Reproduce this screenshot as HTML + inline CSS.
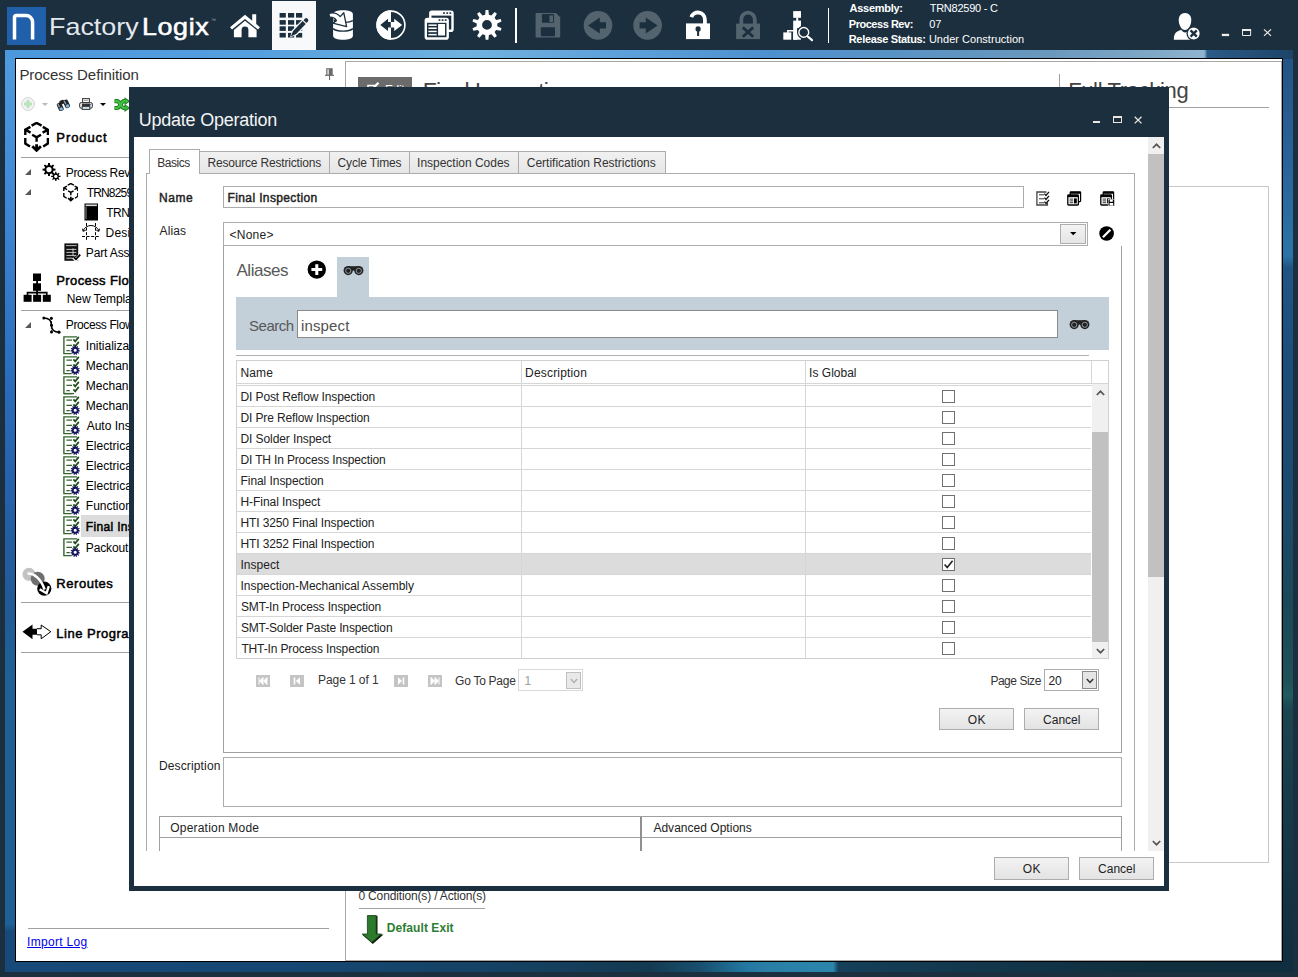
<!DOCTYPE html>
<html><head><meta charset="utf-8"><title>FactoryLogix - Update Operation</title>
<style>
html,body{margin:0;padding:0;}
body{width:1298px;height:977px;position:relative;overflow:hidden;background:#1b2f3e;font-family:"Liberation Sans",sans-serif;font-size:12px;}
.t{position:absolute;white-space:pre;line-height:1;}
div,svg,span{box-sizing:border-box;}

.ln{position:absolute;background:#a0a0a0;}
.btn{position:absolute;border:1px solid #adadad;background:linear-gradient(#f2f2f2,#e4e4e4);}

</style></head><body>
<div style="position:absolute;left:5px;top:50px;width:1288px;height:922px;background:#1d4f7e;"></div>
<div style="position:absolute;left:5px;top:50px;width:11px;height:922px;background:linear-gradient(180deg,#4f9ddd 0%,#4088d6 16%,#2a6dbc 35%,#2560a8 49%,#215a96 60%,#1f6096 68%,#1e6096 94.8%,#174a7a 95.6%,#174a7a 100%);"></div>
<div style="position:absolute;left:1282px;top:50px;width:11px;height:922px;background:linear-gradient(180deg,#245283 0%,#28639a 12%,#2b74a8 22.3%,#1f5585 23.6%,#1b4d7a 35%,#1b4a6e 49%,#1b4858 60%,#1e5058 68%,#205a60 70%,#1b4550 71.5%,#173a48 82%,#133344 92%,#0f2e40 100%);"></div>
<div style="position:absolute;left:5px;top:961px;width:1288px;height:11px;background:linear-gradient(90deg,#174a7a 0%,#164772 23%,#154264 38%,#143a52 50%,#18506f 54%,#2377a0 57.5%,#2a7ea6 59%,#2b86ac 64.3%,#15405a 64.7%,#12364a 77%,#0f2f3e 89%,#0f2e40 100%);"></div>
<div style="position:absolute;left:5px;top:50px;width:1288px;height:9px;background:linear-gradient(90deg,#4b97dc 0%,#55a0de 20%,#70b2df 36%,#5a9dd8 50%,#4e90cf 59.5%,#5a93c4 70%,#6a98bd 81%,#7ea8c6 89%,#90b4d0 93.1%,#2b5b88 93.35%,#1d4468 100%);"></div>
<div style="position:absolute;left:15px;top:58px;width:1268px;height:904px;background:#fff;border:1px solid #000;"></div>
<div style="position:absolute;left:0px;top:0px;width:1298px;height:50px;background:#1b2f3e;"></div>
<div style="position:absolute;left:7px;top:7px;width:39px;height:38px;background:#2060ab;"></div>
<svg style="position:absolute;left:7px;top:7px;" width="39" height="38" viewBox="0 0 39 38"><path d="M7.5 32.6 V10.6 a2 2 0 0 1 2 -2 H19 a6.6 6.6 0 0 1 6.6 6.6 V32.6" fill="none" stroke="#fff" stroke-width="3.5"/></svg>
<span class="t" style="left:49.0px;top:15px;font-size:24px;font-weight:400;color:#e3e8ec;letter-spacing:0.014px;transform:scaleX(1.12);transform-origin:0 0;">Factory</span>
<span class="t" style="left:142.0px;top:15px;font-size:24px;font-weight:400;color:#fff;letter-spacing:0.530px;transform:scaleX(1.12);transform-origin:0 0;-webkit-text-stroke:0.55px #fff;">Logix</span>
<span class="t" style="left:211px;top:18px;font-size:5px;font-weight:400;color:#9ab;letter-spacing:0.000px;">™</span>
<div style="position:absolute;left:272px;top:1px;width:44px;height:49px;background:#f8f9fb;"></div>
<div style="position:absolute;left:515px;top:8px;width:2px;height:35px;background:#fff;"></div>
<div style="position:absolute;left:828px;top:8px;width:1px;height:35px;background:#fff;"></div>
<span class="t" style="left:849.6px;top:3px;font-size:11px;font-weight:700;color:#fff;letter-spacing:-0.291px;">Assembly:</span>
<span class="t" style="left:929.7px;top:3px;font-size:11px;font-weight:400;color:#fff;letter-spacing:-0.242px;">TRN82590 - C</span>
<span class="t" style="left:848.77px;top:19px;font-size:11px;font-weight:700;color:#fff;letter-spacing:-0.467px;">Process Rev:</span>
<span class="t" style="left:929.26px;top:19px;font-size:11px;font-weight:400;color:#fff;letter-spacing:-0.215px;">07</span>
<span class="t" style="left:848.77px;top:34px;font-size:11px;font-weight:700;color:#fff;letter-spacing:-0.335px;">Release Status:</span>
<span class="t" style="left:928.88px;top:34px;font-size:11px;font-weight:400;color:#fff;letter-spacing:0.030px;">Under Construction</span>
<span class="t" style="left:19.38px;top:67px;font-size:15px;font-weight:400;color:#333;letter-spacing:-0.077px;">Process Definition</span>
<div class="ln" style="position:absolute;left:21px;top:157px;width:308px;height:1px;"></div>
<svg style="position:absolute;left:0;top:0" width="1298" height="50" viewBox="0 0 1298 50"><path d="M245 14.8 L230 27.2 L232 29.6 L245 18.9 L258 29.6 L260 27.2 L256.2 24 V14.2 H252.2 V20.7 Z" fill="#fff"/><path d="M245 20.8 L233.9 30 V37.2 H241.6 V29.8 a3.4 3.4 0 0 1 6.8 0 V37.2 H256.6 V30 Z" fill="#fff"/><rect x="279.6" y="13" width="6.2" height="4.6" fill="#1b2f3e"/><rect x="279.6" y="20.1" width="6.2" height="4.6" fill="#1b2f3e"/><rect x="279.6" y="26.3" width="6.2" height="4.6" fill="#1b2f3e"/><rect x="279.6" y="32.9" width="6.2" height="4.6" fill="#1b2f3e"/><rect x="288" y="13" width="6.2" height="4.6" fill="#1b2f3e"/><rect x="288" y="20.1" width="6.2" height="4.6" fill="#1b2f3e"/><rect x="288" y="26.3" width="6.2" height="4.6" fill="#1b2f3e"/><rect x="288" y="32.9" width="6.2" height="4.6" fill="#1b2f3e"/><rect x="296" y="13" width="6.2" height="4.6" fill="#1b2f3e"/><rect x="296" y="20.1" width="6.2" height="4.6" fill="#1b2f3e"/><rect x="296" y="26.3" width="6.2" height="4.6" fill="#1b2f3e"/><rect x="296" y="32.9" width="6.2" height="4.6" fill="#1b2f3e"/><g transform="translate(290.8,36.6) rotate(-46.5)"><path d="M-1 0 L5.5 -3.4 H24.5 a3 3 0 0 1 0 6.8 H5.5 Z" fill="#f8f9fb"/><path d="M0 0 L5.6 -2.1 H19.4 V2.1 H5.6 Z" fill="#1b2f3e"/><path d="M20.6 -2.1 H22.4 a2.1 2.1 0 0 1 0 4.2 H20.6 Z" fill="#1b2f3e"/></g><path d="M333.1 14 C333.1 11.6 337.6 10.2 343 10.2 S352.9 11.6 352.9 14 V36 C352.9 38.3 348.4 39.7 343 39.7 S333.1 38.3 333.1 36 Z" fill="#fff"/><path d="M333.1 28.6 C337 32 349 32 352.9 28.6" stroke="#1b2f3e" stroke-width="1.4" fill="none"/><path d="M345.5 22.3 C348.5 22.2 351 21.6 352.9 20.6" stroke="#1b2f3e" stroke-width="1.3" fill="none"/><path d="M329 13.4 C333 12.4 337.5 13.6 340.2 16.6 L343.8 12.8 L346.6 26.6 L332.8 23.2 L336.4 20.6 C335.2 18.4 332.6 17 329.4 17.2 Z" fill="#fff" stroke="#1b2f3e" stroke-width="1.3" stroke-linejoin="round"/><path d="M333.2 19.2 C334.6 19.4 335.8 20 336.6 20.8 L334 22.6 Z" fill="#1b2f3e"/><circle cx="391" cy="25" r="13.9" fill="none" stroke="#fff" stroke-width="1.6"/><path d="M391 10.3 A14.7 14.7 0 0 0 391 39.7 Z" fill="#fff"/><path d="M380.3 24.9 L388 18.8 V22 H391.2 V27.6 H388 V31 Z" fill="#1b2f3e"/><path d="M402.2 24.9 L394.2 18.8 V22 H390.8 V27.6 H394.2 V31 Z" fill="#fff"/><rect x="430.3" y="11.6" width="22.2" height="19.2" rx="1.6" fill="#1b2f3e" stroke="#fff" stroke-width="2.4"/><rect x="430.3" y="11.6" width="22.2" height="4" fill="#fff"/><rect x="443.1" y="12.3" width="1.8" height="1.6" fill="#1b2f3e"/><rect x="446.3" y="12.3" width="1.8" height="1.6" fill="#1b2f3e"/><rect x="449.40000000000003" y="12.3" width="1.8" height="1.6" fill="#1b2f3e"/><rect x="425.8" y="19" width="21.9" height="19.5" rx="1.6" fill="#1b2f3e" stroke="#fff" stroke-width="2.4"/><rect x="425.8" y="19" width="21.9" height="3.8" fill="#fff"/><rect x="438.6" y="19.3" width="1.8" height="1.6" fill="#1b2f3e"/><rect x="441.70000000000005" y="19.3" width="1.8" height="1.6" fill="#1b2f3e"/><rect x="444.8" y="19.3" width="1.8" height="1.6" fill="#1b2f3e"/><rect x="428.4" y="24.4" width="8.3" height="1.5" fill="#fff"/><rect x="428.4" y="27.5" width="8.3" height="1.5" fill="#fff"/><rect x="428.4" y="30.7" width="8.3" height="1.5" fill="#fff"/><rect x="428.4" y="33.9" width="8.3" height="1.5" fill="#fff"/><rect x="438.1" y="24" width="6.9" height="11.5" fill="#fff"/><path d="M485.6 10.1 L488.4 10.1 L488.9 14.7 L491.4 15.5 L494.6 12.1 L496.9 13.7 L494.6 17.8 L496.1 19.9 L500.7 19.0 L501.5 21.6 L497.3 23.6 L497.3 26.2 L501.5 28.2 L500.7 30.8 L496.1 29.9 L494.6 32.0 L496.9 36.1 L494.6 37.7 L491.4 34.3 L488.9 35.1 L488.4 39.7 L485.6 39.7 L485.1 35.1 L482.6 34.3 L479.4 37.7 L477.1 36.1 L479.4 32.0 L477.9 29.9 L473.3 30.8 L472.5 28.2 L476.7 26.2 L476.7 23.6 L472.5 21.6 L473.3 19.0 L477.9 19.9 L479.4 17.8 L477.1 13.7 L479.4 12.1 L482.6 15.5 L485.1 14.7 Z M482.10 24.90 a4.9 4.9 0 1 0 9.8 0 a4.9 4.9 0 1 0 -9.8 0 Z" fill="#fff" fill-rule="evenodd"/><path d="M536.8 13 H556 L560.2 17.3 V36.4 a1.2 1.2 0 0 1 -1.2 1.2 H536.8 a1.2 1.2 0 0 1 -1.2 -1.2 V14.2 a1.2 1.2 0 0 1 1.2 -1.2 Z" fill="#54646f"/><rect x="541.9" y="14" width="12.1" height="8.7" rx=".8" fill="#1b2f3e"/><rect x="549.5" y="15.4" width="3.5" height="6.6" fill="#54646f"/><rect x="540.8" y="27.2" width="14.2" height="9" rx=".8" fill="#1b2f3e"/><circle cx="598" cy="25.4" r="14.3" fill="#54646f"/><path d="M588 25.4 L599.8 17.4 V22.3 H606 V28.4 H599.8 V33.4 Z" fill="#1b2f3e"/><circle cx="647.6" cy="25.4" r="14.3" fill="#54646f"/><path d="M657.6 25.4 L645.8 17.4 V22.3 H639.6 V28.4 H645.8 V33.4 Z" fill="#1b2f3e"/><path d="M691.3 17.2 A7 7 0 0 1 704.9 19.6 V24" fill="none" stroke="#fff" stroke-width="3.8"/><rect x="686" y="23.4" width="24" height="15.7" fill="#fff"/><circle cx="698.1" cy="28.9" r="2.6" fill="#1b2f3e"/><rect x="697.1" y="29" width="2" height="7" fill="#1b2f3e"/><path d="M741.3 24 V19.4 a6.75 6.75 0 0 1 13.5 0 V24" fill="none" stroke="#54646f" stroke-width="3.8"/><rect x="736.1" y="23.6" width="23.9" height="15.5" fill="#54646f"/><path d="M742.8 27.4 L753.2 36.8 M753.2 27.4 L742.8 36.8" stroke="#1b2f3e" stroke-width="2.8"/><rect x="793.2" y="11.1" width="7.8" height="6.7" fill="#fff"/><rect x="796.2" y="17.5" width="2" height="3.5" fill="#fff"/><rect x="793.2" y="20.6" width="7.8" height="7.4" fill="#fff"/><rect x="793.2" y="27.5" width="4" height="12.2" fill="#fff"/><rect x="787.2" y="30" width="7" height="1.5" fill="#fff"/><rect x="787.2" y="30" width="1.5" height="3" fill="#fff"/><rect x="783.3" y="32.4" width="8" height="7.3" fill="#fff"/><rect x="793.2" y="32.4" width="7.8" height="7.3" fill="#fff"/><circle cx="803.8" cy="32.4" r="5.6" fill="#1b2f3e" stroke="#1b2f3e" stroke-width="2.4"/><circle cx="803.8" cy="32.4" r="4.9" fill="none" stroke="#fff" stroke-width="1.4"/><path d="M807.4 36.2 L812 40.2" stroke="#1b2f3e" stroke-width="4.2"/><path d="M807.6 36.4 L812 40.2" stroke="#fff" stroke-width="2.2" stroke-linecap="round"/><path d="M1185 12.9 C1189 12.9 1191.3 16 1191.3 20 C1191.3 25 1188.5 30 1185 30 C1181.5 30 1178.7 25 1178.7 20 C1178.7 16 1181 12.9 1185 12.9 Z" fill="#fff"/><path d="M1173.8 39.7 C1173.8 33.5 1176 31.6 1181.2 29.8 C1182.5 31.6 1183.6 32.4 1185 32.4 C1186.4 32.4 1187.6 31.6 1188.8 29.8 L1192 31 V39.7 Z" fill="#fff"/><circle cx="1193.7" cy="33.5" r="6.6" fill="#fff" stroke="#1b2f3e" stroke-width="1.3"/><path d="M1190.6 30.4 L1196.8 36.6 M1196.8 30.4 L1190.6 36.6" stroke="#1b2f3e" stroke-width="2.4"/><rect x="1221.8" y="33.8" width="7.3" height="2.3" fill="#f0ede8"/><path d="M1242.5 30 H1250.6 V35.5 H1242.5 Z" fill="none" stroke="#f0ede8" stroke-width="1"/><rect x="1242" y="29" width="9.1" height="2" fill="#f0ede8"/><path d="M1264 29.4 L1271 35.9 M1271 29.4 L1264 35.9" stroke="#f0ede8" stroke-width="1.2"/></svg>
<svg style="position:absolute;left:325px;top:68px;" width="9" height="12" viewBox="0 0 9 12"><rect x="1.2" y="0.2" width="6.5" height="7" fill="#6b6b6b"/><rect x="2.4" y="1.2" width="1.4" height="5.6" fill="#fff" opacity=".85"/><rect x="0" y="6.8" width="9" height="1.1" fill="#6b6b6b"/><rect x="4" y="7.8" width="1.1" height="4.2" fill="#6b6b6b"/></svg>
<svg style="position:absolute;left:21px;top:97px;" width="14" height="14" viewBox="0 0 14 14"><circle cx="7" cy="7" r="6.4" fill="#f3f3f3" stroke="#d2d2d2" stroke-width="1"/><path d="M7 3 V11 M3 7 H11" stroke="#b9e3b9" stroke-width="3"/></svg>
<svg style="position:absolute;left:42px;top:103px;" width="6" height="3" viewBox="0 0 6 3"><path d="M0 0 H6 L3 3 Z" fill="#b9b9b9"/></svg>
<svg style="position:absolute;left:56px;top:97.5px;" width="14" height="13" viewBox="0 0 14 13"><g transform="rotate(-25 7 6.5)"><rect x="1" y="3.2" width="5" height="8.5" rx="2" fill="#222"/><rect x="8" y="3.2" width="5" height="8.5" rx="2" fill="#222"/><rect x="4.5" y="2" width="5" height="4" rx="1.5" fill="#222"/>
<rect x="1.8" y="8.2" width="3.4" height="3" rx="1.2" fill="#7db7e6"/><rect x="8.8" y="8.2" width="3.4" height="3" rx="1.2" fill="#7db7e6"/><rect x="2" y="4" width="1.3" height="3.5" fill="#8fa9c4"/><rect x="9" y="4" width="1.3" height="3.5" fill="#8fa9c4"/></g></svg>
<svg style="position:absolute;left:79px;top:98px;" width="14" height="12" viewBox="0 0 14 12"><rect x="3.6" y="0.6" width="6.8" height="4.4" fill="#fff" stroke="#333" stroke-width="1"/><rect x="4.6" y="1.8" width="4.8" height="1" fill="#999"/>
<rect x="0.6" y="4.6" width="12.8" height="5.6" rx="1.6" fill="#e6e6e6" stroke="#333" stroke-width="1"/><rect x="3" y="5.6" width="8" height="2.4" fill="#333"/>
<rect x="3.2" y="8.6" width="7.6" height="2.8" fill="#fff" stroke="#333" stroke-width="1"/><rect x="4.4" y="9.6" width="5" height="1" fill="#9fd0e8"/><rect x="11" y="6" width="1.2" height="1.2" fill="#4a7fd0"/></svg>
<svg style="position:absolute;left:100px;top:103px;" width="6" height="3" viewBox="0 0 6 3"><path d="M0 0 H6 L3 3 Z" fill="#000"/></svg>
<svg style="position:absolute;left:113px;top:96.5px;" width="18" height="15" viewBox="0 0 18 15"><g fill="none" stroke="#1d7d1d" stroke-width="4.2"><path d="M1.5 4.2 H4 C7.5 4.2 7.5 11 11 11 H12"/><path d="M1.5 11 H4 C7.5 11 7.5 4.2 11 4.2 H12"/></g>
<path d="M11.5 0.2 L17.3 4.2 L11.5 8.2 Z M11.5 7 L17.3 11 L11.5 15 Z" fill="#1d7d1d"/>
<g fill="none" stroke="#43c043" stroke-width="2.2"><path d="M1.8 4.2 H4 C7.5 4.2 7.5 11 11 11 H12.5"/><path d="M1.8 11 H4 C7.5 11 7.5 4.2 11 4.2 H12.5"/></g>
<path d="M12.4 2 L15.6 4.2 L12.4 6.4 Z M12.4 8.8 L15.6 11 L12.4 13.2 Z" fill="#43c043"/></svg>
<svg style="position:absolute;left:24px;top:121.8px;" width="25.3" height="30" viewBox="0 0 25.3 30"><g fill="none" stroke="#000" stroke-width="2.4">
<path d="M7.6 3.6 L12.6 0.9 L17.6 3.6"/>
<path d="M6.4 4.9 L1.4 7.7 L6.6 10.6 M1.3 7.2 V13"/>
<path d="M18.8 4.9 L23.8 7.7 L18.6 10.6 M23.9 7.2 V13"/>
<path d="M8.2 12.7 L12.6 15.3 L17 12.7 M12.6 15.3 V19.8"/>
<path d="M1.3 16 V21.6 L6 24.6"/><path d="M23.9 16 V21.6 L19.2 24.6"/>
<path d="M12.6 22.2 V28 M8.3 24.3 L12.6 28.4 L16.9 24.3" stroke-width="2.8"/></g></svg>
<span class="t" style="left:56.32px;top:131px;font-size:13px;font-weight:400;color:#000;letter-spacing:0.921px;-webkit-text-stroke:0.5px #000;">Product</span>
<div style="position:absolute;left:21px;top:157px;width:308px;height:1px;background:#a0a0a0;"></div>
<svg style="position:absolute;left:25px;top:169px;" width="6" height="6" viewBox="0 0 6 6"><path d="M6 0 V6 H0 Z" fill="#595959"/></svg>
<svg style="position:absolute;left:25px;top:189px;" width="6" height="6" viewBox="0 0 6 6"><path d="M6 0 V6 H0 Z" fill="#595959"/></svg>
<svg style="position:absolute;left:41.5px;top:162.5px;" width="19" height="18.5" viewBox="0 0 19 18.5"><path d="M6.1 0.1 L7.9 0.1 L8.1 2.1 L9.4 2.7 L11.0 1.4 L12.2 2.6 L10.9 4.2 L11.5 5.5 L13.5 5.7 L13.5 7.5 L11.5 7.7 L10.9 9.0 L12.2 10.6 L11.0 11.8 L9.4 10.5 L8.1 11.1 L7.9 13.1 L6.1 13.1 L5.9 11.1 L4.6 10.5 L3.0 11.8 L1.8 10.6 L3.1 9.0 L2.5 7.7 L0.5 7.5 L0.5 5.7 L2.5 5.5 L3.1 4.2 L1.8 2.6 L3.0 1.4 L4.6 2.7 L5.9 2.1 Z M4.40 6.60 a2.6 2.6 0 1 0 5.2 0 a2.6 2.6 0 1 0 -5.2 0 Z" fill="#000" fill-rule="evenodd"/><path d="M13.2 8.7 L14.4 8.7 L14.5 10.3 L15.5 10.7 L16.7 9.7 L17.5 10.5 L16.5 11.7 L16.9 12.7 L18.5 12.8 L18.5 14.0 L16.9 14.1 L16.5 15.1 L17.5 16.3 L16.7 17.1 L15.5 16.1 L14.5 16.5 L14.4 18.1 L13.2 18.1 L13.1 16.5 L12.1 16.1 L10.9 17.1 L10.1 16.3 L11.1 15.1 L10.7 14.1 L9.1 14.0 L9.1 12.8 L10.7 12.7 L11.1 11.7 L10.1 10.5 L10.9 9.7 L12.1 10.7 L13.1 10.3 Z M12.10 13.40 a1.7 1.7 0 1 0 3.4 0 a1.7 1.7 0 1 0 -3.4 0 Z" fill="#000" fill-rule="evenodd"/></svg>
<span class="t" style="left:65.8px;top:167px;font-size:12px;font-weight:400;color:#000;letter-spacing:-0.360px;">Process Revision</span>
<svg style="position:absolute;left:62.8px;top:183px;" width="15.69" height="18.6" viewBox="0 0 25.3 30"><g fill="none" stroke="#000" stroke-width="2.3">
<path d="M7.6 3.6 L12.6 0.9 L17.6 3.6"/>
<path d="M6.4 4.9 L1.4 7.7 L6.6 10.6 M1.3 7.2 V13"/>
<path d="M18.8 4.9 L23.8 7.7 L18.6 10.6 M23.9 7.2 V13"/>
<path d="M8.2 12.7 L12.6 15.3 L17 12.7 M12.6 15.3 V19.8"/>
<path d="M1.3 16 V21.6 L6 24.6"/><path d="M23.9 16 V21.6 L19.2 24.6"/>
<path d="M12.6 22.2 V28 M8.3 24.3 L12.6 28.4 L16.9 24.3" stroke-width="2.6999999999999997"/></g></svg>
<span class="t" style="left:86.7px;top:187px;font-size:12px;font-weight:400;color:#000;letter-spacing:-0.828px;">TRN82590 - C</span>
<svg style="position:absolute;left:84px;top:203px;" width="15" height="18" viewBox="0 0 15 18"><rect x="0.5" y="0.5" width="13.5" height="17" fill="#000"/><rect x="1.6" y="1.5" width="11.3" height="1.6" fill="#ddd"/><rect x="1.6" y="3.6" width="0.8" height="12.5" fill="#bbb"/></svg>
<span class="t" style="left:106.3px;top:207px;font-size:12px;font-weight:400;color:#000;letter-spacing:-0.574px;">TRN82590</span>
<svg style="position:absolute;left:82px;top:223px;" width="18" height="18" viewBox="0 0 18 18"><g stroke="#000" stroke-width="1" fill="none"><path d="M4.5 0 V18 M13.5 0 V18 M0 13.5 H18" stroke-dasharray="3 1.6"/><path d="M0.8 8.2 C4 0.6 14 0.6 17.2 8.2" /><path d="M0.4 5.6 L1.4 8.4 L3.8 7 M17.6 5.6 L16.6 8.4 L14.2 7"/></g></svg>
<span class="t" style="left:105.6px;top:227px;font-size:12px;font-weight:400;color:#000;letter-spacing:0.180px;">Design</span>
<svg style="position:absolute;left:63.5px;top:243px;" width="17" height="18.5" viewBox="0 0 17 18.5"><rect x="0.4" y="0.4" width="13.8" height="17.4" fill="#111"/>
<path d="M2 2.6 H12.6" stroke="#bbb" stroke-width="1"/>
<path d="M2.4 6.4 H12.4 M2.4 9.4 H12.4 M2.4 12.4 H12.4 M2.4 15.2 H8.4" stroke="#d8d8d8" stroke-width=".9"/><path d="M9 5.4 V12.6" stroke="#d8d8d8" stroke-width=".9"/>
<path d="M9.3 14.2 L12 16.9 L16.5 11.8" stroke="#fff" stroke-width="3.4" fill="none"/><path d="M9.7 14 L12 16.3 L16.2 11.6" stroke="#000" stroke-width="1.8" fill="none"/></svg>
<span class="t" style="left:85.8px;top:247px;font-size:12px;font-weight:400;color:#000;letter-spacing:-0.129px;">Part Assignment</span>
<svg style="position:absolute;left:22.5px;top:272.6px;" width="29" height="29" viewBox="0 0 29 29"><rect x="10" y="0.5" width="8" height="7.5" fill="#000"/><rect x="10" y="10.3" width="8" height="7.5" fill="#000"/><rect x="13.2" y="7.5" width="1.8" height="13.5" fill="#000"/>
<path d="M4.5 24 V19.6 H23.8 V24 M14.1 19 V24" stroke="#000" stroke-width="1.6" fill="none"/>
<rect x="0.6" y="21.8" width="8" height="7" fill="#000"/><rect x="10.1" y="21.8" width="8" height="7" fill="#000"/><rect x="19.8" y="21.8" width="8" height="7" fill="#000"/></svg>
<span class="t" style="left:56.32px;top:274px;font-size:13px;font-weight:400;color:#000;letter-spacing:0.377px;-webkit-text-stroke:0.5px #000;">Process Flow</span>
<span class="t" style="left:66.8px;top:293px;font-size:12px;font-weight:400;color:#000;letter-spacing:-0.099px;">New Template</span>
<div style="position:absolute;left:21px;top:310px;width:308px;height:1px;background:#a0a0a0;"></div>
<svg style="position:absolute;left:25px;top:322px;" width="6" height="6" viewBox="0 0 6 6"><path d="M6 0 V6 H0 Z" fill="#595959"/></svg>
<svg style="position:absolute;left:41.5px;top:315.5px;" width="19" height="18.5" viewBox="0 0 19 18.5"><path d="M1.5 2 C8 2 9.5 5 9.5 9.2 S11 16.2 17.2 16.2" fill="none" stroke="#000" stroke-width="1.5"/>
<circle cx="1.8" cy="2" r="1.5"/><circle cx="9.4" cy="2.2" r="1.5"/><circle cx="9.5" cy="9.2" r="1.5"/><circle cx="9.5" cy="16" r="1.5"/><circle cx="17" cy="16.2" r="1.6"/>
<path d="M9.4 2.2 V16" stroke="#000" stroke-width=".9" stroke-dasharray="1.5 1.5"/></svg>
<span class="t" style="left:65.8px;top:319px;font-size:12px;font-weight:400;color:#000;letter-spacing:-0.383px;">Process Flow</span>
<svg style="position:absolute;left:63.3px;top:335.6px;" width="17" height="19.5" viewBox="0 0 17 19.5"><path d="M14 0.9 H0.9 V17.6 H8.6" fill="none" stroke="#35642f" stroke-width="1.4"/>
<path d="M3.4 4.1 H9 M3.4 9.3 H9 M3.4 14.6 H6.8" stroke="#35642f" stroke-width="1.2"/>
<path d="M10.4 3.4 L12.2 5.4 L15.8 0.9" fill="none" stroke="#1f4d1c" stroke-width="1.7"/>
<path d="M10.4 8.4 L12.2 10.4 L15.8 5.9" fill="none" stroke="#1f4d1c" stroke-width="1.7"/><circle cx="12.2" cy="14.3" r="3.3" fill="#fff"/><path d="M11.7 9.6 L12.7 9.6 L12.9 11.0 L13.4 11.1 L14.3 10.1 L15.2 10.7 L14.6 11.9 L14.9 12.3 L16.2 11.9 L16.7 12.8 L15.5 13.5 L15.6 14.1 L16.9 14.4 L16.7 15.5 L15.4 15.5 L15.2 16.0 L16.1 17.0 L15.4 17.8 L14.3 17.0 L13.8 17.3 L14.0 18.6 L13.0 18.9 L12.5 17.7 L11.9 17.7 L11.4 18.9 L10.4 18.6 L10.6 17.3 L10.1 17.0 L9.0 17.8 L8.3 17.0 L9.2 16.0 L9.0 15.5 L7.7 15.5 L7.5 14.4 L8.8 14.1 L8.9 13.5 L7.7 12.8 L8.2 11.9 L9.5 12.3 L9.8 11.9 L9.2 10.7 L10.1 10.1 L11.0 11.1 L11.5 11.0 Z M10.65 14.30 a1.55 1.55 0 1 0 3.1 0 a1.55 1.55 0 1 0 -3.1 0 Z" fill="#15155f" fill-rule="evenodd"/></svg>
<span class="t" style="left:85.8px;top:340px;font-size:12px;font-weight:400;color:#000;letter-spacing:0.000px;">Initialization</span>
<svg style="position:absolute;left:63.3px;top:355.6px;" width="17" height="19.5" viewBox="0 0 17 19.5"><path d="M14 0.9 H0.9 V17.6 H8.6" fill="none" stroke="#35642f" stroke-width="1.4"/>
<path d="M3.4 4.1 H9 M3.4 9.3 H9 M3.4 14.6 H6.8" stroke="#35642f" stroke-width="1.2"/>
<path d="M10.4 3.4 L12.2 5.4 L15.8 0.9" fill="none" stroke="#1f4d1c" stroke-width="1.7"/>
<path d="M10.4 8.4 L12.2 10.4 L15.8 5.9" fill="none" stroke="#1f4d1c" stroke-width="1.7"/><circle cx="12.2" cy="14.3" r="3.3" fill="#fff"/><path d="M11.7 9.6 L12.7 9.6 L12.9 11.0 L13.4 11.1 L14.3 10.1 L15.2 10.7 L14.6 11.9 L14.9 12.3 L16.2 11.9 L16.7 12.8 L15.5 13.5 L15.6 14.1 L16.9 14.4 L16.7 15.5 L15.4 15.5 L15.2 16.0 L16.1 17.0 L15.4 17.8 L14.3 17.0 L13.8 17.3 L14.0 18.6 L13.0 18.9 L12.5 17.7 L11.9 17.7 L11.4 18.9 L10.4 18.6 L10.6 17.3 L10.1 17.0 L9.0 17.8 L8.3 17.0 L9.2 16.0 L9.0 15.5 L7.7 15.5 L7.5 14.4 L8.8 14.1 L8.9 13.5 L7.7 12.8 L8.2 11.9 L9.5 12.3 L9.8 11.9 L9.2 10.7 L10.1 10.1 L11.0 11.1 L11.5 11.0 Z M10.65 14.30 a1.55 1.55 0 1 0 3.1 0 a1.55 1.55 0 1 0 -3.1 0 Z" fill="#15155f" fill-rule="evenodd"/></svg>
<span class="t" style="left:85.8px;top:360px;font-size:12px;font-weight:400;color:#000;letter-spacing:0.000px;">Mechanical Assembly</span>
<svg style="position:absolute;left:63.3px;top:375.6px;" width="17" height="19.5" viewBox="0 0 17 19.5"><path d="M14 0.9 H0.9 V17.6 H8.6" fill="none" stroke="#35642f" stroke-width="1.4"/>
<path d="M3.4 4.1 H9 M3.4 9.3 H9 M3.4 14.6 H6.8" stroke="#35642f" stroke-width="1.2"/>
<path d="M10.4 3.4 L12.2 5.4 L15.8 0.9" fill="none" stroke="#1f4d1c" stroke-width="1.7"/>
<path d="M10.4 8.4 L12.2 10.4 L15.8 5.9" fill="none" stroke="#1f4d1c" stroke-width="1.7"/><path d="M10.4 13.4 L12.2 15.4 L15.8 10.9" fill="none" stroke="#1f4d1c" stroke-width="1.7"/><path d="M11 17.6 H0.9" stroke="#35642f" stroke-width="1.4"/></svg>
<span class="t" style="left:85.8px;top:380px;font-size:12px;font-weight:400;color:#000;letter-spacing:0.000px;">Mechanical Assembly</span>
<svg style="position:absolute;left:63.3px;top:395.6px;" width="17" height="19.5" viewBox="0 0 17 19.5"><path d="M14 0.9 H0.9 V17.6 H8.6" fill="none" stroke="#35642f" stroke-width="1.4"/>
<path d="M3.4 4.1 H9 M3.4 9.3 H9 M3.4 14.6 H6.8" stroke="#35642f" stroke-width="1.2"/>
<path d="M10.4 3.4 L12.2 5.4 L15.8 0.9" fill="none" stroke="#1f4d1c" stroke-width="1.7"/>
<path d="M10.4 8.4 L12.2 10.4 L15.8 5.9" fill="none" stroke="#1f4d1c" stroke-width="1.7"/><circle cx="12.2" cy="14.3" r="3.3" fill="#fff"/><path d="M11.7 9.6 L12.7 9.6 L12.9 11.0 L13.4 11.1 L14.3 10.1 L15.2 10.7 L14.6 11.9 L14.9 12.3 L16.2 11.9 L16.7 12.8 L15.5 13.5 L15.6 14.1 L16.9 14.4 L16.7 15.5 L15.4 15.5 L15.2 16.0 L16.1 17.0 L15.4 17.8 L14.3 17.0 L13.8 17.3 L14.0 18.6 L13.0 18.9 L12.5 17.7 L11.9 17.7 L11.4 18.9 L10.4 18.6 L10.6 17.3 L10.1 17.0 L9.0 17.8 L8.3 17.0 L9.2 16.0 L9.0 15.5 L7.7 15.5 L7.5 14.4 L8.8 14.1 L8.9 13.5 L7.7 12.8 L8.2 11.9 L9.5 12.3 L9.8 11.9 L9.2 10.7 L10.1 10.1 L11.0 11.1 L11.5 11.0 Z M10.65 14.30 a1.55 1.55 0 1 0 3.1 0 a1.55 1.55 0 1 0 -3.1 0 Z" fill="#15155f" fill-rule="evenodd"/></svg>
<span class="t" style="left:85.8px;top:400px;font-size:12px;font-weight:400;color:#000;letter-spacing:0.000px;">Mechanical Assembly</span>
<svg style="position:absolute;left:63.3px;top:415.6px;" width="17" height="19.5" viewBox="0 0 17 19.5"><path d="M14 0.9 H0.9 V17.6 H8.6" fill="none" stroke="#35642f" stroke-width="1.4"/>
<path d="M3.4 4.1 H9 M3.4 9.3 H9 M3.4 14.6 H6.8" stroke="#35642f" stroke-width="1.2"/>
<path d="M10.4 3.4 L12.2 5.4 L15.8 0.9" fill="none" stroke="#1f4d1c" stroke-width="1.7"/>
<path d="M10.4 8.4 L12.2 10.4 L15.8 5.9" fill="none" stroke="#1f4d1c" stroke-width="1.7"/><circle cx="12.2" cy="14.3" r="3.3" fill="#fff"/><path d="M11.7 9.6 L12.7 9.6 L12.9 11.0 L13.4 11.1 L14.3 10.1 L15.2 10.7 L14.6 11.9 L14.9 12.3 L16.2 11.9 L16.7 12.8 L15.5 13.5 L15.6 14.1 L16.9 14.4 L16.7 15.5 L15.4 15.5 L15.2 16.0 L16.1 17.0 L15.4 17.8 L14.3 17.0 L13.8 17.3 L14.0 18.6 L13.0 18.9 L12.5 17.7 L11.9 17.7 L11.4 18.9 L10.4 18.6 L10.6 17.3 L10.1 17.0 L9.0 17.8 L8.3 17.0 L9.2 16.0 L9.0 15.5 L7.7 15.5 L7.5 14.4 L8.8 14.1 L8.9 13.5 L7.7 12.8 L8.2 11.9 L9.5 12.3 L9.8 11.9 L9.2 10.7 L10.1 10.1 L11.0 11.1 L11.5 11.0 Z M10.65 14.30 a1.55 1.55 0 1 0 3.1 0 a1.55 1.55 0 1 0 -3.1 0 Z" fill="#15155f" fill-rule="evenodd"/></svg>
<span class="t" style="left:86.7px;top:420px;font-size:12px;font-weight:400;color:#000;letter-spacing:0.000px;">Auto Inspection</span>
<svg style="position:absolute;left:63.3px;top:435.6px;" width="17" height="19.5" viewBox="0 0 17 19.5"><path d="M14 0.9 H0.9 V17.6 H8.6" fill="none" stroke="#35642f" stroke-width="1.4"/>
<path d="M3.4 4.1 H9 M3.4 9.3 H9 M3.4 14.6 H6.8" stroke="#35642f" stroke-width="1.2"/>
<path d="M10.4 3.4 L12.2 5.4 L15.8 0.9" fill="none" stroke="#1f4d1c" stroke-width="1.7"/>
<path d="M10.4 8.4 L12.2 10.4 L15.8 5.9" fill="none" stroke="#1f4d1c" stroke-width="1.7"/><circle cx="12.2" cy="14.3" r="3.3" fill="#fff"/><path d="M11.7 9.6 L12.7 9.6 L12.9 11.0 L13.4 11.1 L14.3 10.1 L15.2 10.7 L14.6 11.9 L14.9 12.3 L16.2 11.9 L16.7 12.8 L15.5 13.5 L15.6 14.1 L16.9 14.4 L16.7 15.5 L15.4 15.5 L15.2 16.0 L16.1 17.0 L15.4 17.8 L14.3 17.0 L13.8 17.3 L14.0 18.6 L13.0 18.9 L12.5 17.7 L11.9 17.7 L11.4 18.9 L10.4 18.6 L10.6 17.3 L10.1 17.0 L9.0 17.8 L8.3 17.0 L9.2 16.0 L9.0 15.5 L7.7 15.5 L7.5 14.4 L8.8 14.1 L8.9 13.5 L7.7 12.8 L8.2 11.9 L9.5 12.3 L9.8 11.9 L9.2 10.7 L10.1 10.1 L11.0 11.1 L11.5 11.0 Z M10.65 14.30 a1.55 1.55 0 1 0 3.1 0 a1.55 1.55 0 1 0 -3.1 0 Z" fill="#15155f" fill-rule="evenodd"/></svg>
<span class="t" style="left:85.8px;top:440px;font-size:12px;font-weight:400;color:#000;letter-spacing:0.000px;">Electrical Test</span>
<svg style="position:absolute;left:63.3px;top:455.6px;" width="17" height="19.5" viewBox="0 0 17 19.5"><path d="M14 0.9 H0.9 V17.6 H8.6" fill="none" stroke="#35642f" stroke-width="1.4"/>
<path d="M3.4 4.1 H9 M3.4 9.3 H9 M3.4 14.6 H6.8" stroke="#35642f" stroke-width="1.2"/>
<path d="M10.4 3.4 L12.2 5.4 L15.8 0.9" fill="none" stroke="#1f4d1c" stroke-width="1.7"/>
<path d="M10.4 8.4 L12.2 10.4 L15.8 5.9" fill="none" stroke="#1f4d1c" stroke-width="1.7"/><circle cx="12.2" cy="14.3" r="3.3" fill="#fff"/><path d="M11.7 9.6 L12.7 9.6 L12.9 11.0 L13.4 11.1 L14.3 10.1 L15.2 10.7 L14.6 11.9 L14.9 12.3 L16.2 11.9 L16.7 12.8 L15.5 13.5 L15.6 14.1 L16.9 14.4 L16.7 15.5 L15.4 15.5 L15.2 16.0 L16.1 17.0 L15.4 17.8 L14.3 17.0 L13.8 17.3 L14.0 18.6 L13.0 18.9 L12.5 17.7 L11.9 17.7 L11.4 18.9 L10.4 18.6 L10.6 17.3 L10.1 17.0 L9.0 17.8 L8.3 17.0 L9.2 16.0 L9.0 15.5 L7.7 15.5 L7.5 14.4 L8.8 14.1 L8.9 13.5 L7.7 12.8 L8.2 11.9 L9.5 12.3 L9.8 11.9 L9.2 10.7 L10.1 10.1 L11.0 11.1 L11.5 11.0 Z M10.65 14.30 a1.55 1.55 0 1 0 3.1 0 a1.55 1.55 0 1 0 -3.1 0 Z" fill="#15155f" fill-rule="evenodd"/></svg>
<span class="t" style="left:85.8px;top:460px;font-size:12px;font-weight:400;color:#000;letter-spacing:0.000px;">Electrical Test</span>
<svg style="position:absolute;left:63.3px;top:475.6px;" width="17" height="19.5" viewBox="0 0 17 19.5"><path d="M14 0.9 H0.9 V17.6 H8.6" fill="none" stroke="#35642f" stroke-width="1.4"/>
<path d="M3.4 4.1 H9 M3.4 9.3 H9 M3.4 14.6 H6.8" stroke="#35642f" stroke-width="1.2"/>
<path d="M10.4 3.4 L12.2 5.4 L15.8 0.9" fill="none" stroke="#1f4d1c" stroke-width="1.7"/>
<path d="M10.4 8.4 L12.2 10.4 L15.8 5.9" fill="none" stroke="#1f4d1c" stroke-width="1.7"/><circle cx="12.2" cy="14.3" r="3.3" fill="#fff"/><path d="M11.7 9.6 L12.7 9.6 L12.9 11.0 L13.4 11.1 L14.3 10.1 L15.2 10.7 L14.6 11.9 L14.9 12.3 L16.2 11.9 L16.7 12.8 L15.5 13.5 L15.6 14.1 L16.9 14.4 L16.7 15.5 L15.4 15.5 L15.2 16.0 L16.1 17.0 L15.4 17.8 L14.3 17.0 L13.8 17.3 L14.0 18.6 L13.0 18.9 L12.5 17.7 L11.9 17.7 L11.4 18.9 L10.4 18.6 L10.6 17.3 L10.1 17.0 L9.0 17.8 L8.3 17.0 L9.2 16.0 L9.0 15.5 L7.7 15.5 L7.5 14.4 L8.8 14.1 L8.9 13.5 L7.7 12.8 L8.2 11.9 L9.5 12.3 L9.8 11.9 L9.2 10.7 L10.1 10.1 L11.0 11.1 L11.5 11.0 Z M10.65 14.30 a1.55 1.55 0 1 0 3.1 0 a1.55 1.55 0 1 0 -3.1 0 Z" fill="#15155f" fill-rule="evenodd"/></svg>
<span class="t" style="left:85.8px;top:480px;font-size:12px;font-weight:400;color:#000;letter-spacing:0.000px;">Electrical Test</span>
<svg style="position:absolute;left:63.3px;top:495.6px;" width="17" height="19.5" viewBox="0 0 17 19.5"><path d="M14 0.9 H0.9 V17.6 H8.6" fill="none" stroke="#35642f" stroke-width="1.4"/>
<path d="M3.4 4.1 H9 M3.4 9.3 H9 M3.4 14.6 H6.8" stroke="#35642f" stroke-width="1.2"/>
<path d="M10.4 3.4 L12.2 5.4 L15.8 0.9" fill="none" stroke="#1f4d1c" stroke-width="1.7"/>
<path d="M10.4 8.4 L12.2 10.4 L15.8 5.9" fill="none" stroke="#1f4d1c" stroke-width="1.7"/><circle cx="12.2" cy="14.3" r="3.3" fill="#fff"/><path d="M11.7 9.6 L12.7 9.6 L12.9 11.0 L13.4 11.1 L14.3 10.1 L15.2 10.7 L14.6 11.9 L14.9 12.3 L16.2 11.9 L16.7 12.8 L15.5 13.5 L15.6 14.1 L16.9 14.4 L16.7 15.5 L15.4 15.5 L15.2 16.0 L16.1 17.0 L15.4 17.8 L14.3 17.0 L13.8 17.3 L14.0 18.6 L13.0 18.9 L12.5 17.7 L11.9 17.7 L11.4 18.9 L10.4 18.6 L10.6 17.3 L10.1 17.0 L9.0 17.8 L8.3 17.0 L9.2 16.0 L9.0 15.5 L7.7 15.5 L7.5 14.4 L8.8 14.1 L8.9 13.5 L7.7 12.8 L8.2 11.9 L9.5 12.3 L9.8 11.9 L9.2 10.7 L10.1 10.1 L11.0 11.1 L11.5 11.0 Z M10.65 14.30 a1.55 1.55 0 1 0 3.1 0 a1.55 1.55 0 1 0 -3.1 0 Z" fill="#15155f" fill-rule="evenodd"/></svg>
<span class="t" style="left:85.8px;top:500px;font-size:12px;font-weight:400;color:#000;letter-spacing:0.000px;">Functional Test</span>
<div style="position:absolute;left:81px;top:515px;width:60px;height:22px;background:#dcdcdc;"></div>
<svg style="position:absolute;left:63.3px;top:516px;" width="17" height="19.5" viewBox="0 0 17 19.5"><path d="M14 0.9 H0.9 V17.6 H8.6" fill="none" stroke="#35642f" stroke-width="1.4"/>
<path d="M3.4 4.1 H9 M3.4 9.3 H9 M3.4 14.6 H6.8" stroke="#35642f" stroke-width="1.2"/>
<path d="M10.4 3.4 L12.2 5.4 L15.8 0.9" fill="none" stroke="#1f4d1c" stroke-width="1.7"/>
<path d="M10.4 8.4 L12.2 10.4 L15.8 5.9" fill="none" stroke="#1f4d1c" stroke-width="1.7"/><circle cx="12.2" cy="14.3" r="3.3" fill="#fff"/><path d="M11.7 9.6 L12.7 9.6 L12.9 11.0 L13.4 11.1 L14.3 10.1 L15.2 10.7 L14.6 11.9 L14.9 12.3 L16.2 11.9 L16.7 12.8 L15.5 13.5 L15.6 14.1 L16.9 14.4 L16.7 15.5 L15.4 15.5 L15.2 16.0 L16.1 17.0 L15.4 17.8 L14.3 17.0 L13.8 17.3 L14.0 18.6 L13.0 18.9 L12.5 17.7 L11.9 17.7 L11.4 18.9 L10.4 18.6 L10.6 17.3 L10.1 17.0 L9.0 17.8 L8.3 17.0 L9.2 16.0 L9.0 15.5 L7.7 15.5 L7.5 14.4 L8.8 14.1 L8.9 13.5 L7.7 12.8 L8.2 11.9 L9.5 12.3 L9.8 11.9 L9.2 10.7 L10.1 10.1 L11.0 11.1 L11.5 11.0 Z M10.65 14.30 a1.55 1.55 0 1 0 3.1 0 a1.55 1.55 0 1 0 -3.1 0 Z" fill="#15155f" fill-rule="evenodd"/></svg>
<span class="t" style="left:85.8px;top:521px;font-size:12px;font-weight:400;color:#000;letter-spacing:0.337px;-webkit-text-stroke:0.5px #000;">Final Inspection</span>
<svg style="position:absolute;left:63.3px;top:537.6px;" width="17" height="19.5" viewBox="0 0 17 19.5"><path d="M14 0.9 H0.9 V17.6 H8.6" fill="none" stroke="#35642f" stroke-width="1.4"/>
<path d="M3.4 4.1 H9 M3.4 9.3 H9 M3.4 14.6 H6.8" stroke="#35642f" stroke-width="1.2"/>
<path d="M10.4 3.4 L12.2 5.4 L15.8 0.9" fill="none" stroke="#1f4d1c" stroke-width="1.7"/>
<path d="M10.4 8.4 L12.2 10.4 L15.8 5.9" fill="none" stroke="#1f4d1c" stroke-width="1.7"/><circle cx="12.2" cy="14.3" r="3.3" fill="#fff"/><path d="M11.7 9.6 L12.7 9.6 L12.9 11.0 L13.4 11.1 L14.3 10.1 L15.2 10.7 L14.6 11.9 L14.9 12.3 L16.2 11.9 L16.7 12.8 L15.5 13.5 L15.6 14.1 L16.9 14.4 L16.7 15.5 L15.4 15.5 L15.2 16.0 L16.1 17.0 L15.4 17.8 L14.3 17.0 L13.8 17.3 L14.0 18.6 L13.0 18.9 L12.5 17.7 L11.9 17.7 L11.4 18.9 L10.4 18.6 L10.6 17.3 L10.1 17.0 L9.0 17.8 L8.3 17.0 L9.2 16.0 L9.0 15.5 L7.7 15.5 L7.5 14.4 L8.8 14.1 L8.9 13.5 L7.7 12.8 L8.2 11.9 L9.5 12.3 L9.8 11.9 L9.2 10.7 L10.1 10.1 L11.0 11.1 L11.5 11.0 Z M10.65 14.30 a1.55 1.55 0 1 0 3.1 0 a1.55 1.55 0 1 0 -3.1 0 Z" fill="#15155f" fill-rule="evenodd"/></svg>
<span class="t" style="left:85.8px;top:542px;font-size:12px;font-weight:400;color:#000;letter-spacing:-0.131px;">Packout</span>
<svg style="position:absolute;left:20px;top:565px;" width="36" height="34" viewBox="0 0 36 34"><circle cx="9" cy="9.3" r="6.5" fill="#c2c2c2"/><circle cx="17.7" cy="13.7" r="7" fill="#6e6e6e"/><circle cx="24.3" cy="23.7" r="7.1" fill="#000"/>
<path d="M7.6 8.6 C14 8 21 14 24.6 24.5" stroke="#fff" stroke-width="2.6" fill="none"/>
<path d="M19.6 24.2 L26.6 28.2 L28.8 21.2" stroke="#fff" stroke-width="2.4" fill="none"/></svg>
<span class="t" style="left:56.32px;top:577px;font-size:13px;font-weight:400;color:#000;letter-spacing:0.539px;-webkit-text-stroke:0.5px #000;">Reroutes</span>
<div style="position:absolute;left:21px;top:602px;width:308px;height:1px;background:#a0a0a0;"></div>
<svg style="position:absolute;left:20px;top:622px;" width="34" height="20" viewBox="0 0 34 20"><path d="M2.5 9.7 L12.5 2.6 V6.7 H17 V12.8 H12.5 V17.2 Z" fill="#000"/>
<path d="M17 6.7 H21.2 V3 L30.8 9.7 L21.2 16.8 V12.8 H17" fill="#fff" stroke="#000" stroke-width="1"/></svg>
<span class="t" style="left:56.32px;top:627px;font-size:13px;font-weight:400;color:#000;letter-spacing:0.501px;-webkit-text-stroke:0.5px #000;">Line Programs</span>
<div style="position:absolute;left:21px;top:652px;width:308px;height:1px;background:#a0a0a0;"></div>
<div style="position:absolute;left:28px;top:928px;width:301px;height:1px;background:#a0a0a0;"></div>
<span class="t" style="left:27.1px;top:936px;font-size:12px;font-weight:400;color:#0000ee;letter-spacing:0.306px;text-decoration:underline;">Import Log</span>
<div style="position:absolute;left:345px;top:61px;width:937px;height:900px;border:1px solid #a8a8a8;"></div>
<div style="position:absolute;left:358px;top:77px;width:54px;height:30px;background:#6b6b6b;"></div>
<svg style="position:absolute;left:366.5px;top:82px;" width="13" height="12" viewBox="0 0 13 12"><path d="M1 3.5 H8 V11 H1 Z" fill="none" stroke="#fff" stroke-width="1.6"/><path d="M4 8.5 L11.5 0.8" stroke="#fff" stroke-width="2.2"/></svg>
<span class="t" style="left:384.9px;top:84px;font-size:12px;font-weight:400;color:#fff;letter-spacing:-0.312px;">Edit</span>
<span class="t" style="left:422.67px;top:81px;font-size:23px;font-weight:400;color:#444;letter-spacing:-0.708px;">Final Inspection</span>
<div style="position:absolute;left:1059px;top:74px;width:1px;height:40px;background:#a0a0a0;"></div>
<span class="t" style="left:1068.15px;top:80px;font-size:22px;font-weight:400;color:#444;letter-spacing:-0.352px;">Full Tracking</span>
<div style="position:absolute;left:1070px;top:107px;width:199px;height:1px;background:#a0a0a0;"></div>
<div style="position:absolute;left:1100px;top:186px;width:169px;height:677px;border:1px solid #c8c8c8;"></div>
<span class="t" style="left:358.42px;top:890px;font-size:12px;font-weight:400;color:#333;letter-spacing:-0.152px;">0 Condition(s) / Action(s)</span>
<div style="position:absolute;left:359px;top:908px;width:126px;height:1px;background:#a0a0a0;"></div>
<svg style="position:absolute;left:361px;top:915px;" width="24" height="30" viewBox="0 0 24 30"><path d="M7 0.8 H16.5 V19.5 H22.5 L11.8 29 L1 19.5 H7 Z" fill="#0c1a0c"/><path d="M6.4 0.6 H15.2 V19 H20.4 L10.8 27.4 L1.4 19 H6.4 Z" fill="#2c7a2c" stroke="#163f16" stroke-width=".8"/></svg>
<span class="t" style="left:386.8px;top:922px;font-size:12px;font-weight:700;color:#2e7d32;letter-spacing:0.069px;">Default Exit</span>
<div style="position:absolute;left:129px;top:87px;width:1040px;height:804px;background:#1b2f3e;"></div>
<div style="position:absolute;left:134px;top:137px;width:1030px;height:749px;background:#fff;"></div>
<span class="t" style="left:138.75px;top:111px;font-size:18px;font-weight:400;color:#f4f4f4;letter-spacing:-0.233px;">Update Operation</span>
<div style="position:absolute;left:1093px;top:120.7px;width:7.2px;height:2.3px;background:#ebe7e0;"></div>
<div style="position:absolute;left:1113px;top:116px;width:9px;height:7px;border:1px solid #ebe7e0;border-top-width:2px;"></div>
<svg style="position:absolute;left:1134.1px;top:115.5px;" width="9" height="8" viewBox="0 0 9 8"><path d="M0.7 0.7 L7.5 7.4 M7.5 0.7 L0.7 7.4" stroke="#ebe7e0" stroke-width="1.3"/></svg>
<div style="position:absolute;left:1148px;top:137px;width:16px;height:714px;background:#f0f0f0;"></div>
<div style="position:absolute;left:1148px;top:154px;width:16px;height:423px;background:#c1c1c1;"></div>
<svg style="position:absolute;left:1152px;top:143px;" width="9" height="6" viewBox="0 0 9 6"><path d="M0.8 5 L4.5 1.3 L8.2 5" fill="none" stroke="#555" stroke-width="1.7"/></svg>
<svg style="position:absolute;left:1152px;top:839.6px;" width="9" height="6" viewBox="0 0 9 6"><path d="M0.8 1 L4.5 4.7 L8.2 1" fill="none" stroke="#555" stroke-width="1.7"/></svg>
<div style="position:absolute;left:146px;top:173px;width:989px;height:678px;border:1px solid #acacac;border-bottom:none;"></div>
<div style="position:absolute;left:199px;top:151px;width:132px;height:23px;border:1px solid #acacac;background:linear-gradient(#f1f1f1,#e6e6e6);"></div>
<span class="t" style="left:207.5px;top:157px;font-size:12px;font-weight:400;color:#333;letter-spacing:-0.187px;">Resource Restrictions</span>
<div style="position:absolute;left:329px;top:151px;width:82px;height:23px;border:1px solid #acacac;background:linear-gradient(#f1f1f1,#e6e6e6);"></div>
<span class="t" style="left:337.52px;top:157px;font-size:12px;font-weight:400;color:#333;letter-spacing:-0.128px;">Cycle Times</span>
<div style="position:absolute;left:409px;top:151px;width:111px;height:23px;border:1px solid #acacac;background:linear-gradient(#f1f1f1,#e6e6e6);"></div>
<span class="t" style="left:417.1px;top:157px;font-size:12px;font-weight:400;color:#333;letter-spacing:-0.018px;">Inspection Codes</span>
<div style="position:absolute;left:518px;top:151px;width:148px;height:23px;border:1px solid #acacac;background:linear-gradient(#f1f1f1,#e6e6e6);"></div>
<span class="t" style="left:526.82px;top:157px;font-size:12px;font-weight:400;color:#333;letter-spacing:-0.017px;">Certification Restrictions</span>
<div style="position:absolute;left:149px;top:149px;width:51px;height:25px;border:1px solid #acacac;border-bottom:none;background:#fff;"></div>
<span class="t" style="left:157.3px;top:157px;font-size:12px;font-weight:400;color:#333;letter-spacing:-0.484px;">Basics</span>
<span class="t" style="left:158.9px;top:192px;font-size:12px;font-weight:400;color:#222;letter-spacing:0.606px;-webkit-text-stroke:0.45px #222;">Name</span>
<div style="position:absolute;left:223px;top:186px;width:801px;height:22px;border:1px solid #acacac;background:#fff;"></div>
<span class="t" style="left:227.6px;top:192px;font-size:12px;font-weight:400;color:#222;letter-spacing:0.368px;-webkit-text-stroke:0.45px #222;">Final Inspection</span>
<span class="t" style="left:159.6px;top:225px;font-size:12px;font-weight:400;color:#222;letter-spacing:0.085px;">Alias</span>
<div style="position:absolute;left:223px;top:222px;width:865px;height:24px;border:1px solid #acacac;background:#fff;"></div>
<span class="t" style="left:229.52px;top:229px;font-size:12px;font-weight:400;color:#222;letter-spacing:0.239px;">&lt;None&gt;</span>
<div style="position:absolute;left:1060px;top:224px;width:26px;height:20px;border:1px solid #adadad;background:linear-gradient(#f3f3f3,#e5e5e5);"></div>
<svg style="position:absolute;left:1069.8px;top:232px;" width="7" height="4" viewBox="0 0 7 4"><path d="M0 0 H6.4 L3.2 3.2 Z" fill="#000"/></svg>
<svg style="position:absolute;left:1099.4px;top:226.4px;" width="16" height="16" viewBox="0 0 16 16"><circle cx="7.6" cy="7.5" r="7.3" fill="#000"/><path d="M3.9 11.3 L11.4 3.8" stroke="#fff" stroke-width="2.3"/></svg>
<svg style="position:absolute;left:1036px;top:190.5px;" width="14" height="15" viewBox="0 0 14 15"><path d="M10.5 1 H0.9 V14 H11.4 V11.5" fill="none" stroke="#444" stroke-width="1.3"/>
<path d="M3 3.8 H8 M3 7.8 H8 M3 11.8 H8" stroke="#333" stroke-width="1"/>
<path d="M8.4 2.6 L10 4.4 L13 0.8 M8.4 6.6 L10 8.4 L13 4.8 M8.4 10.6 L10 12.4 L13 8.8" fill="none" stroke="#111" stroke-width="1.3"/></svg>
<svg style="position:absolute;left:1066.6px;top:190.8px;" width="15" height="15.5" viewBox="0 0 15 15.5"><rect x="3.2" y="0.8" width="10.4" height="9.8" rx=".8" fill="#fff" stroke="#000" stroke-width="1.2"/><rect x="3.2" y="0.8" width="10.4" height="2" fill="#000"/>
<rect x="0.8" y="4" width="10.6" height="10" rx=".8" fill="#fff" stroke="#000" stroke-width="1.3"/><rect x="0.8" y="4" width="10.6" height="2.2" fill="#000"/>
<rect x="2.6" y="7.6" width="3.6" height="1" fill="#333"/><rect x="2.6" y="9.4" width="3.6" height="1" fill="#333"/><rect x="2.6" y="11.2" width="3.6" height="1" fill="#333"/><rect x="7" y="7.4" width="2.8" height="5" fill="#000"/></svg>
<svg style="position:absolute;left:1099.7px;top:190.8px;" width="15" height="15.5" viewBox="0 0 15 15.5"><rect x="3.2" y="0.8" width="10.4" height="9.8" rx=".8" fill="#fff" stroke="#000" stroke-width="1.2"/><rect x="3.2" y="0.8" width="10.4" height="2" fill="#000"/>
<rect x="0.8" y="4" width="10.6" height="10" rx=".8" fill="#fff" stroke="#000" stroke-width="1.3"/><rect x="0.8" y="4" width="10.6" height="2.2" fill="#000"/>
<rect x="2.6" y="7.6" width="3.6" height="1" fill="#333"/><rect x="2.6" y="9.4" width="3.6" height="1" fill="#333"/><rect x="2.6" y="11.2" width="3.6" height="1" fill="#333"/><rect x="7" y="7.4" width="2.8" height="5" fill="#000"/><rect x="8.2" y="8.2" width="6.4" height="6.8" fill="#000" stroke="#fff" stroke-width=".6"/><rect x="9.8" y="8.6" width="3" height="2.2" fill="#fff"/><rect x="9.6" y="12" width="3.6" height="2.6" fill="#fff"/></svg>
<div style="position:absolute;left:223px;top:246px;width:899px;height:507px;border:1px solid #a0a0a0;border-top:none;background:#fff;"></div>
<span class="t" style="left:236.4px;top:262px;font-size:17px;font-weight:400;color:#585858;letter-spacing:-0.439px;">Aliases</span>
<svg style="position:absolute;left:307.4px;top:260.4px;" width="20" height="20" viewBox="0 0 20 20"><circle cx="9.8" cy="9.6" r="9.2" fill="#000"/><path d="M9.8 4.2 V15 M4.4 9.6 H15.2" stroke="#fff" stroke-width="3"/></svg>
<div style="position:absolute;left:337px;top:257px;width:32px;height:41px;background:#c3cfd9;"></div>
<div style="position:absolute;left:236px;top:297px;width:873px;height:53.3px;background:#c3cfd9;"></div>
<svg style="position:absolute;left:342.5px;top:264.5px;" width="21" height="11" viewBox="0 0 21 11"><circle cx="5.2" cy="5.6" r="4.6" fill="#222"/><circle cx="15.8" cy="5.6" r="4.6" fill="#222"/><rect x="5" y="1.2" width="11" height="4.4" fill="#222"/>
<circle cx="5.2" cy="5.8" r="2.6" fill="none" stroke="#8f98a0" stroke-width="1"/><circle cx="15.8" cy="5.8" r="2.6" fill="none" stroke="#8f98a0" stroke-width="1"/></svg>
<span class="t" style="left:249.0px;top:318px;font-size:15px;font-weight:400;color:#585858;letter-spacing:-0.472px;">Search</span>
<div style="position:absolute;left:297px;top:310px;width:761px;height:28px;border:1px solid #8a8a8a;background:#fff;"></div>
<span class="t" style="left:300.98px;top:318px;font-size:15px;font-weight:400;color:#505050;letter-spacing:0.138px;">inspect</span>
<svg style="position:absolute;left:1068.5px;top:318.5px;" width="21" height="11" viewBox="0 0 21 11"><circle cx="5.2" cy="5.6" r="4.6" fill="#222"/><circle cx="15.8" cy="5.6" r="4.6" fill="#222"/><rect x="5" y="1.2" width="11" height="4.4" fill="#222"/>
<circle cx="5.2" cy="5.8" r="2.6" fill="none" stroke="#8f98a0" stroke-width="1"/><circle cx="15.8" cy="5.8" r="2.6" fill="none" stroke="#8f98a0" stroke-width="1"/></svg>
<div style="position:absolute;left:236px;top:355px;width:853px;height:1px;background:#b0b0b0;"></div>
<div style="position:absolute;left:236px;top:360px;width:873px;height:299px;border:1px solid #d0d0d0;background:#fff;"></div>
<div style="position:absolute;left:236px;top:383px;width:872px;height:1px;background:#d6d6d6;"></div>
<div style="position:absolute;left:236px;top:385px;width:856px;height:1px;background:#d6d6d6;"></div>
<span class="t" style="left:240.5px;top:367px;font-size:12px;font-weight:400;color:#222;letter-spacing:0.106px;">Name</span>
<span class="t" style="left:525.1px;top:367px;font-size:12px;font-weight:400;color:#222;letter-spacing:0.174px;">Description</span>
<span class="t" style="left:809.1px;top:367px;font-size:12px;font-weight:400;color:#222;letter-spacing:0.009px;">Is Global</span>
<span class="t" style="left:240.5px;top:391px;font-size:12px;font-weight:400;color:#222;letter-spacing:-0.115px;">DI Post Reflow Inspection</span>
<div style="position:absolute;left:237px;top:406.4px;width:854px;height:1px;background:#d6d6d6;"></div>
<div style="position:absolute;left:942px;top:390px;width:13px;height:13px;border:1px solid #707070;background:#fff;"></div>
<span class="t" style="left:240.5px;top:412px;font-size:12px;font-weight:400;color:#222;letter-spacing:-0.126px;">DI Pre Reflow Inspection</span>
<div style="position:absolute;left:237px;top:427.4px;width:854px;height:1px;background:#d6d6d6;"></div>
<div style="position:absolute;left:942px;top:411px;width:13px;height:13px;border:1px solid #707070;background:#fff;"></div>
<span class="t" style="left:240.5px;top:433px;font-size:12px;font-weight:400;color:#222;letter-spacing:-0.089px;">DI Solder Inspect</span>
<div style="position:absolute;left:237px;top:448.4px;width:854px;height:1px;background:#d6d6d6;"></div>
<div style="position:absolute;left:942px;top:432px;width:13px;height:13px;border:1px solid #707070;background:#fff;"></div>
<span class="t" style="left:240.5px;top:454px;font-size:12px;font-weight:400;color:#222;letter-spacing:-0.157px;">DI TH In Process Inspection</span>
<div style="position:absolute;left:237px;top:469.4px;width:854px;height:1px;background:#d6d6d6;"></div>
<div style="position:absolute;left:942px;top:453px;width:13px;height:13px;border:1px solid #707070;background:#fff;"></div>
<span class="t" style="left:240.5px;top:475px;font-size:12px;font-weight:400;color:#222;letter-spacing:-0.057px;">Final Inspection</span>
<div style="position:absolute;left:237px;top:490.4px;width:854px;height:1px;background:#d6d6d6;"></div>
<div style="position:absolute;left:942px;top:474px;width:13px;height:13px;border:1px solid #707070;background:#fff;"></div>
<span class="t" style="left:240.5px;top:496px;font-size:12px;font-weight:400;color:#222;letter-spacing:-0.058px;">H-Final Inspect</span>
<div style="position:absolute;left:237px;top:511.4px;width:854px;height:1px;background:#d6d6d6;"></div>
<div style="position:absolute;left:942px;top:495px;width:13px;height:13px;border:1px solid #707070;background:#fff;"></div>
<span class="t" style="left:240.5px;top:517px;font-size:12px;font-weight:400;color:#222;letter-spacing:-0.116px;">HTI 3250 Final Inspection</span>
<div style="position:absolute;left:237px;top:532.4px;width:854px;height:1px;background:#d6d6d6;"></div>
<div style="position:absolute;left:942px;top:516px;width:13px;height:13px;border:1px solid #707070;background:#fff;"></div>
<span class="t" style="left:240.5px;top:538px;font-size:12px;font-weight:400;color:#222;letter-spacing:-0.116px;">HTI 3252 Final Inspection</span>
<div style="position:absolute;left:237px;top:553.4px;width:854px;height:1px;background:#d6d6d6;"></div>
<div style="position:absolute;left:942px;top:537px;width:13px;height:13px;border:1px solid #707070;background:#fff;"></div>
<div style="position:absolute;left:237px;top:553.5px;width:854px;height:21px;background:#dcdcdc;"></div>
<span class="t" style="left:240.5px;top:559px;font-size:12px;font-weight:400;color:#222;letter-spacing:0.020px;">Inspect</span>
<div style="position:absolute;left:237px;top:574.4px;width:854px;height:1px;background:#d6d6d6;"></div>
<div style="position:absolute;left:942px;top:558px;width:13px;height:13px;border:1px solid #707070;background:#fff;"></div>
<svg style="position:absolute;left:943px;top:559px;" width="11" height="11" viewBox="0 0 11 11"><path d="M1.6 5.6 L4.2 8.6 L9.6 1.8" fill="none" stroke="#222" stroke-width="1.6"/></svg>
<span class="t" style="left:240.5px;top:580px;font-size:12px;font-weight:400;color:#222;letter-spacing:-0.022px;">Inspection-Mechanical Assembly</span>
<div style="position:absolute;left:237px;top:595.4px;width:854px;height:1px;background:#d6d6d6;"></div>
<div style="position:absolute;left:942px;top:579px;width:13px;height:13px;border:1px solid #707070;background:#fff;"></div>
<span class="t" style="left:240.92px;top:601px;font-size:12px;font-weight:400;color:#222;letter-spacing:-0.130px;">SMT-In Process Inspection</span>
<div style="position:absolute;left:237px;top:616.4px;width:854px;height:1px;background:#d6d6d6;"></div>
<div style="position:absolute;left:942px;top:600px;width:13px;height:13px;border:1px solid #707070;background:#fff;"></div>
<span class="t" style="left:240.92px;top:622px;font-size:12px;font-weight:400;color:#222;letter-spacing:-0.144px;">SMT-Solder Paste Inspection</span>
<div style="position:absolute;left:237px;top:637.4px;width:854px;height:1px;background:#d6d6d6;"></div>
<div style="position:absolute;left:942px;top:621px;width:13px;height:13px;border:1px solid #707070;background:#fff;"></div>
<span class="t" style="left:241.4px;top:643px;font-size:12px;font-weight:400;color:#222;letter-spacing:-0.138px;">THT-In Process Inspection</span>
<div style="position:absolute;left:942px;top:642px;width:13px;height:13px;border:1px solid #707070;background:#fff;"></div>
<div style="position:absolute;left:521px;top:361px;width:1px;height:297px;background:#d6d6d6;"></div>
<div style="position:absolute;left:805px;top:361px;width:1px;height:297px;background:#d6d6d6;"></div>
<div style="position:absolute;left:1091px;top:361px;width:1px;height:23px;background:#d6d6d6;"></div>
<div style="position:absolute;left:1092px;top:384px;width:16px;height:274px;background:#f0f0f0;"></div>
<div style="position:absolute;left:1092px;top:432px;width:16px;height:210px;background:#c1c1c1;"></div>
<svg style="position:absolute;left:1096px;top:389.7px;" width="9" height="6" viewBox="0 0 9 6"><path d="M0.8 5 L4.5 1.3 L8.2 5" fill="none" stroke="#555" stroke-width="1.7"/></svg>
<svg style="position:absolute;left:1096px;top:648px;" width="9" height="6" viewBox="0 0 9 6"><path d="M0.8 1 L4.5 4.7 L8.2 1" fill="none" stroke="#555" stroke-width="1.7"/></svg>
<svg style="position:absolute;left:256px;top:675px;" width="14" height="12" viewBox="0 0 14 12"><rect width="14" height="12" fill="#c4c4c4"/><path d="M3 2.5 V9.5 M7 2.5 L3.6 6 L7 9.5 Z M11 2.5 L7.6 6 L11 9.5 Z" fill="#fff" stroke="#fff" stroke-width="1"/></svg>
<svg style="position:absolute;left:290px;top:675px;" width="14" height="12" viewBox="0 0 14 12"><rect width="14" height="12" fill="#c4c4c4"/><path d="M4.5 2.5 V9.5" stroke="#fff" stroke-width="1.6"/><path d="M10 2.3 L5.8 6 L10 9.7 Z" fill="#fff"/></svg>
<svg style="position:absolute;left:393.5px;top:675px;" width="14" height="12" viewBox="0 0 14 12"><rect width="14" height="12" fill="#c4c4c4"/><path d="M9.5 2.5 V9.5" stroke="#fff" stroke-width="1.6"/><path d="M4 2.3 L8.2 6 L4 9.7 Z" fill="#fff"/></svg>
<svg style="position:absolute;left:427.5px;top:675px;" width="14" height="12" viewBox="0 0 14 12"><rect width="14" height="12" fill="#c4c4c4"/><path d="M11 2.5 V9.5 M7 2.5 L10.4 6 L7 9.5 Z M3 2.5 L6.4 6 L3 9.5 Z" fill="#fff" stroke="#fff" stroke-width="1"/></svg>
<span class="t" style="left:318.1px;top:674px;font-size:12px;font-weight:400;color:#333;letter-spacing:-0.086px;">Page 1 of 1</span>
<span class="t" style="left:455.12px;top:675px;font-size:12px;font-weight:400;color:#333;letter-spacing:-0.273px;">Go To Page</span>
<div style="position:absolute;left:518px;top:669px;width:65px;height:22px;border:1px solid #d9d9d9;background:#fff;"></div>
<span class="t" style="left:524.52px;top:675px;font-size:12px;font-weight:400;color:#a0a0a0;letter-spacing:-0.144px;">1</span>
<div style="position:absolute;left:566px;top:672px;width:15px;height:17px;border:1px solid #c0c0c0;background:#e9e9e9;"></div>
<svg style="position:absolute;left:569.5px;top:677.5px;" width="8" height="6" viewBox="0 0 8 6"><path d="M0.8 1 L4 4.4 L7.2 1" fill="none" stroke="#b0b0b0" stroke-width="1.4"/></svg>
<span class="t" style="left:990.4px;top:675px;font-size:12px;font-weight:400;color:#333;letter-spacing:-0.474px;">Page Size</span>
<div style="position:absolute;left:1044px;top:669px;width:55px;height:22px;border:1px solid #abadb3;background:#fff;"></div>
<span class="t" style="left:1048.52px;top:675px;font-size:12px;font-weight:400;color:#222;letter-spacing:-0.144px;">20</span>
<div style="position:absolute;left:1082px;top:671px;width:15px;height:18px;border:1px solid #8a8a8a;background:#e5e5e5;"></div>
<svg style="position:absolute;left:1085.5px;top:677.5px;" width="8" height="6" viewBox="0 0 8 6"><path d="M0.8 1 L4 4.4 L7.2 1" fill="none" stroke="#333" stroke-width="1.5"/></svg>
<div style="position:absolute;left:939px;top:708px;width:75px;height:22px;border:1px solid #adadad;background:linear-gradient(#f3f3f3,#e3e3e3);"></div><span class="t" style="left:967.77px;top:714px;font-size:12px;font-weight:400;color:#222;letter-spacing:0.298px;">OK</span>
<div style="position:absolute;left:1024px;top:708px;width:75px;height:22px;border:1px solid #adadad;background:linear-gradient(#f3f3f3,#e3e3e3);"></div><span class="t" style="left:1043.02px;top:714px;font-size:12px;font-weight:400;color:#222;letter-spacing:0.013px;">Cancel</span>
<span class="t" style="left:158.9px;top:760px;font-size:12px;font-weight:400;color:#222;letter-spacing:0.146px;">Description</span>
<div style="position:absolute;left:223px;top:757px;width:899px;height:50px;border:1px solid #acacac;background:#fff;"></div>
<div style="position:absolute;left:159px;top:816px;width:963px;height:40px;border:1px solid #a0a0a0;"></div>
<div style="position:absolute;left:159px;top:837px;width:963px;height:1px;background:#a0a0a0;"></div>
<div style="position:absolute;left:640px;top:817px;width:2px;height:40px;background:#909090;"></div>
<span class="t" style="left:170.22px;top:822px;font-size:12px;font-weight:400;color:#222;letter-spacing:0.206px;">Operation Mode</span>
<span class="t" style="left:653.4px;top:822px;font-size:12px;font-weight:400;color:#222;letter-spacing:0.024px;">Advanced Options</span>
<div style="position:absolute;left:134px;top:851px;width:1030px;height:35px;background:#fff;"></div>
<div style="position:absolute;left:994px;top:857px;width:75px;height:23px;border:1px solid #adadad;background:linear-gradient(#f3f3f3,#e3e3e3);"></div><span class="t" style="left:1022.77px;top:863px;font-size:12px;font-weight:400;color:#222;letter-spacing:0.298px;">OK</span>
<div style="position:absolute;left:1079px;top:857px;width:75px;height:23px;border:1px solid #adadad;background:linear-gradient(#f3f3f3,#e3e3e3);"></div><span class="t" style="left:1098.02px;top:863px;font-size:12px;font-weight:400;color:#222;letter-spacing:0.013px;">Cancel</span>
</body></html>
